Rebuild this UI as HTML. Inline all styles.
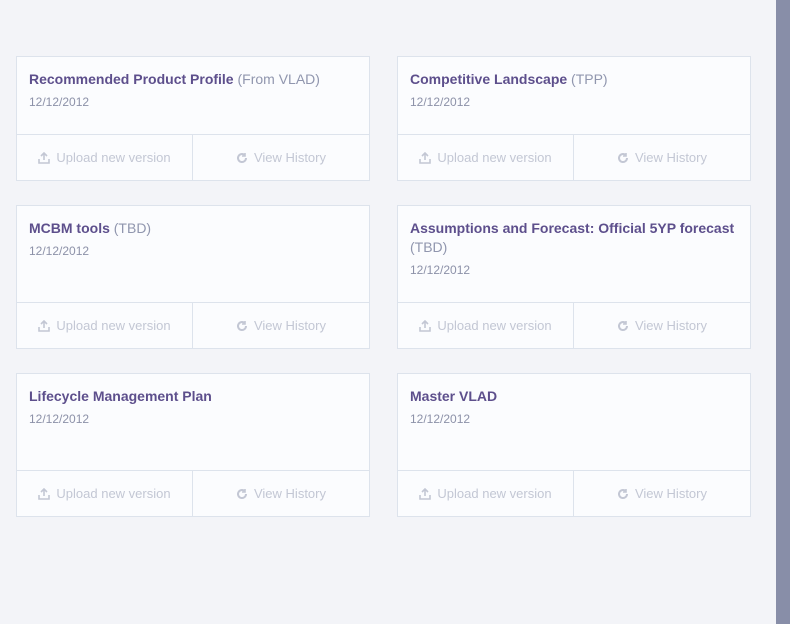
<!DOCTYPE html>
<html><head><style>
body{margin:0;width:790px;height:624px;background:#f3f4f8;font-family:"Liberation Sans",sans-serif;position:relative;overflow:hidden}
.sb{position:absolute;left:776px;top:0;width:14px;height:624px;background:#888ea8}
.row{position:absolute;left:16px;display:flex;gap:27px;width:735px}
.card{width:353px;background:#fbfcfe;border:1px solid #dde3ec;display:flex;flex-direction:column}
.hd{padding:13px 8px 0 12px;box-sizing:border-box;height:77px}
.r2 .hd{height:96px}
.t{font-size:14px;font-weight:bold;color:#5d4f8c;line-height:19px}
.t span{font-weight:normal;color:#9096ae}
.d{font-size:12px;color:#8c91a8;margin-top:6px;line-height:14px}
.ft{height:45px;border-top:1px solid #dde3ec;display:flex;font-size:13px;color:#c3c7d4}
.ft div{display:flex;align-items:center;justify-content:center;gap:6px}
.ft .a{width:175px;border-right:1px solid #dde3ec}
.ft .b{flex:1}
svg{display:block}
</style></head><body>
<div class="sb"></div>
<div class="row" style="top:56px">
<div class="card"><div class="hd"><div class="t">Recommended Product Profile <span>(From VLAD)</span></div><div class="d">12/12/2012</div></div>
<div class="ft"><div class="a"><svg width="12" height="12" viewBox="0 0 12 12" fill="none" stroke="#c3c7d4" stroke-width="1.6"><path d="M6 8V1M3 4l3-3 3 3M1 7v4h10V7"/></svg>Upload new version</div><div class="b"><svg width="12" height="12" viewBox="0 0 12 12" fill="none" stroke="#c3c7d4" stroke-width="2"><path d="M10 6a4 4 0 1 1-1.5-3.1"/><path d="M9 1v3H6" stroke-width="1.6"/></svg>View History</div></div></div>
<div class="card"><div class="hd"><div class="t">Competitive Landscape <span>(TPP)</span></div><div class="d">12/12/2012</div></div>
<div class="ft"><div class="a"><svg width="12" height="12" viewBox="0 0 12 12" fill="none" stroke="#c3c7d4" stroke-width="1.6"><path d="M6 8V1M3 4l3-3 3 3M1 7v4h10V7"/></svg>Upload new version</div><div class="b"><svg width="12" height="12" viewBox="0 0 12 12" fill="none" stroke="#c3c7d4" stroke-width="2"><path d="M10 6a4 4 0 1 1-1.5-3.1"/><path d="M9 1v3H6" stroke-width="1.6"/></svg>View History</div></div></div>
</div>
<div class="row r2" style="top:205px">
<div class="card"><div class="hd"><div class="t">MCBM tools <span>(TBD)</span></div><div class="d">12/12/2012</div></div>
<div class="ft"><div class="a"><svg width="12" height="12" viewBox="0 0 12 12" fill="none" stroke="#c3c7d4" stroke-width="1.6"><path d="M6 8V1M3 4l3-3 3 3M1 7v4h10V7"/></svg>Upload new version</div><div class="b"><svg width="12" height="12" viewBox="0 0 12 12" fill="none" stroke="#c3c7d4" stroke-width="2"><path d="M10 6a4 4 0 1 1-1.5-3.1"/><path d="M9 1v3H6" stroke-width="1.6"/></svg>View History</div></div></div>
<div class="card"><div class="hd"><div class="t">Assumptions and Forecast: Official 5YP forecast <span>(TBD)</span></div><div class="d">12/12/2012</div></div>
<div class="ft"><div class="a"><svg width="12" height="12" viewBox="0 0 12 12" fill="none" stroke="#c3c7d4" stroke-width="1.6"><path d="M6 8V1M3 4l3-3 3 3M1 7v4h10V7"/></svg>Upload new version</div><div class="b"><svg width="12" height="12" viewBox="0 0 12 12" fill="none" stroke="#c3c7d4" stroke-width="2"><path d="M10 6a4 4 0 1 1-1.5-3.1"/><path d="M9 1v3H6" stroke-width="1.6"/></svg>View History</div></div></div>
</div>
<div class="row r2" style="top:373px">
<div class="card"><div class="hd"><div class="t">Lifecycle Management Plan</div><div class="d">12/12/2012</div></div>
<div class="ft"><div class="a"><svg width="12" height="12" viewBox="0 0 12 12" fill="none" stroke="#c3c7d4" stroke-width="1.6"><path d="M6 8V1M3 4l3-3 3 3M1 7v4h10V7"/></svg>Upload new version</div><div class="b"><svg width="12" height="12" viewBox="0 0 12 12" fill="none" stroke="#c3c7d4" stroke-width="2"><path d="M10 6a4 4 0 1 1-1.5-3.1"/><path d="M9 1v3H6" stroke-width="1.6"/></svg>View History</div></div></div>
<div class="card"><div class="hd"><div class="t">Master VLAD</div><div class="d">12/12/2012</div></div>
<div class="ft"><div class="a"><svg width="12" height="12" viewBox="0 0 12 12" fill="none" stroke="#c3c7d4" stroke-width="1.6"><path d="M6 8V1M3 4l3-3 3 3M1 7v4h10V7"/></svg>Upload new version</div><div class="b"><svg width="12" height="12" viewBox="0 0 12 12" fill="none" stroke="#c3c7d4" stroke-width="2"><path d="M10 6a4 4 0 1 1-1.5-3.1"/><path d="M9 1v3H6" stroke-width="1.6"/></svg>View History</div></div></div>
</div>
</body></html>
